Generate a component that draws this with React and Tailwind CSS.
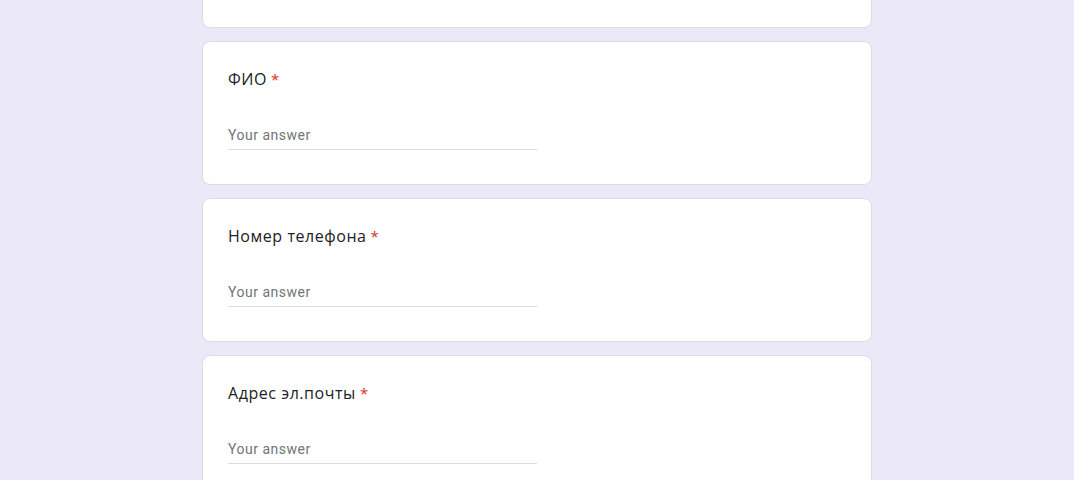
import React from "react";

function Question({ title }) {
  return (
    <div className="bg-white border border-[#dadce0] rounded-lg h-[144px] px-[25px] pt-[25px]">
      <div className="text-[16px] leading-[24px] text-[#202124] tracking-[0.55px] font-['Open_Sans',sans-serif]">
        {title}
        <span className="text-[#d93025] ml-[4px] text-[15px]">*</span>
      </div>
      <div className="mt-[34px] w-[309px] border-b border-[#dadce0] pb-[4px]">
        <div className="text-[14px] leading-[20px] text-[#70757a] tracking-[0.5px] font-['Roboto',sans-serif]">
          Your answer
        </div>
      </div>
    </div>
  );
}

export default function App() {
  return (
    <div className="min-h-[480px] h-[480px] overflow-hidden bg-[#ebe9f7] font-['Roboto',sans-serif]">
      <div className="w-[670px] mx-auto flex flex-col gap-[13px]">
        <div className="bg-white border border-t-0 border-[#dadce0] rounded-b-lg h-[28px]" />
        <Question title="ФИО" />
        <Question title="Номер телефона" />
        <Question title="Адрес эл.почты" />
      </div>
    </div>
  );
}
